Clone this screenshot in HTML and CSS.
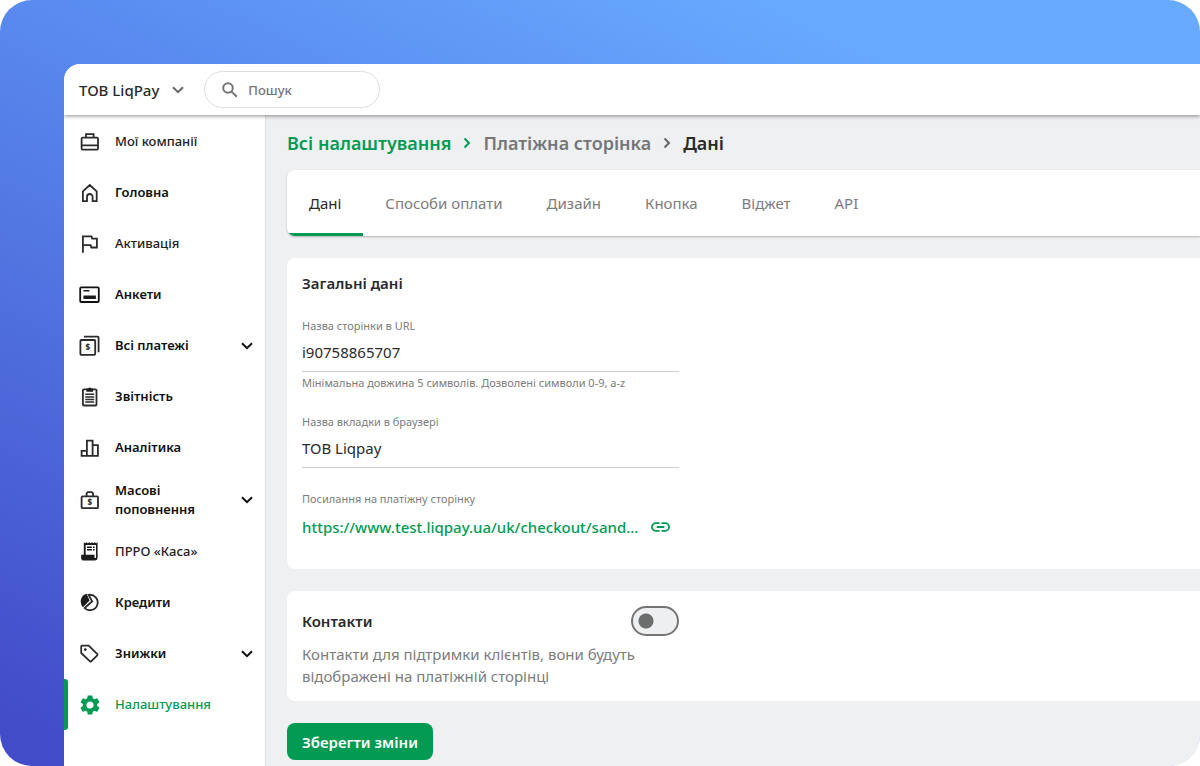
FILE: index.html
```html
<!DOCTYPE html>
<html lang="uk">
<head>
<meta charset="utf-8">
<title>ТОВ LiqPay</title>
<meta name="viewport" content="width=device-width, initial-scale=1">
<link rel="stylesheet" href="styles.css">
</head>
<body>
<div class="stage">
  <div class="window">
    <header class="topbar">
      <button class="company" type="button">ТОВ LiqPay
        <svg class="chevron" viewBox="0 0 12 8"><path d="M1 1.2l5 5 5-5"/></svg>
      </button>
      <label class="search">
        <svg class="search-icon" viewBox="0 0 16 16"><circle cx="6" cy="6" r="4.8"/><path d="M9.6 9.6l5.2 5.2"/></svg>
        <input class="search-input" type="search" placeholder="Пошук" aria-label="Пошук">
      </label>
    </header>
    <div class="body">
      <nav class="sidebar">
        <a class="nav-item soft" href="#">
          <svg class="icon" viewBox="0 0 22 22"><rect x="2.6" y="6.6" width="16.4" height="12" rx="1"/><path d="M7 6.600V3.200h7.600V6.600M2.600 14.400H19"/></svg>
          <span class="nav-text">Мої компанії</span>
        </a>
        <a class="nav-item" href="#">
          <svg class="icon" viewBox="0 0 22 22"><path d="M3.9 19.1V9.4L10.8 3l6.9 6.4v9.7h-4.1v-4.3a2.8 2.8 0 0 0-5.6 0v4.3z"/></svg>
          <span class="nav-text">Головна</span>
        </a>
        <a class="nav-item soft" href="#">
          <svg class="icon" viewBox="0 0 22 22"><path d="M3.9 19.8V3.3h8.6l.6 2.4h4.8v8.8h-5.6l-.6-2.4H3.9"/></svg>
          <span class="nav-text">Активація</span>
        </a>
        <a class="nav-item" href="#">
          <svg class="icon dark" viewBox="0 0 22 22"><rect x="1.2" y="3.4" width="18.6" height="14.6" rx="1"/><path class="solid" d="M4.4 6h6v1.6h-6zM4.4 11.4h12.5v3.7H4.4z"/></svg>
          <span class="nav-text">Анкети</span>
        </a>
        <a class="nav-item" href="#">
          <svg class="icon" viewBox="0 0 22 22"><rect x="1.4" y="5" width="14.8" height="14.8" rx="1"/><path d="M5 1.7h13.6a1 1 0 0 1 1 1v14.6"/><text class="sign" x="8.8" y="15.4">$</text></svg>
          <span class="nav-text">Всі платежі</span>
          <svg class="chevron" viewBox="0 0 12 8"><path d="M1 1.2l5 5 5-5"/></svg>
        </a>
        <a class="nav-item" href="#">
          <svg class="icon" viewBox="0 0 22 22"><rect x="3.9" y="3.3" width="13.6" height="16.2" rx="1"/><path class="solid" d="M7.4 2.4h2a1.4 1.4 0 0 1 2.6 0h2v3.4H7.4z"/><path class="thin" d="M6.2 8.3h9M6.2 10.9h9M6.2 13.5h9M6.2 16.1h9"/></svg>
          <span class="nav-text">Звітність</span>
        </a>
        <a class="nav-item" href="#">
          <svg class="icon" viewBox="0 0 22 22"><path d="M7.9 13.8H2.6v5.1h16.3V8.2h-5.3M7.9 18.9V3.6h5.7v15.3"/></svg>
          <span class="nav-text">Аналітика</span>
        </a>
        <a class="nav-item tall" href="#">
          <svg class="icon" viewBox="0 0 22 22"><rect x="2.6" y="7.4" width="16.4" height="11.8" rx="1"/><path d="M7.6 7V4.4l1.2-1.2h4l1.2 1.2V7"/><text class="sign" x="10.8" y="16.4">$</text></svg>
          <span class="nav-text">Масові поповнення</span>
          <svg class="chevron" viewBox="0 0 12 8"><path d="M1 1.2l5 5 5-5"/></svg>
        </a>
        <a class="nav-item soft" href="#">
          <svg class="icon dark" viewBox="0 0 22 22"><path class="solid" fill-rule="evenodd" d="M4.8 1.2l1.3 1 1.4-1 1.4 1 1.4-1 1.4 1 1.4-1 1.4 1 1.4-1 1.4 1 1.3-1v15.3a3 3 0 0 1-3 3H4.9a2.8 2.8 0 0 1-2.8-2.8v-2.9h2.7zM6.7 4v9.8h8.8v2.6a.8.8 0 0 0 1.5 0V4z"/><path class="thin" d="M8 6.2h4.8M8 8.8h4.8M14 6.2h1.6M14 8.8h1.6"/></svg>
          <span class="nav-text">ПРРО «Каса»</span>
        </a>
        <a class="nav-item" href="#">
          <svg class="icon" viewBox="0 0 22 22"><path class="solid" d="M7.6 1.800L10.600 8.600l-6.600 6.600A8.600 8.600 0 0 1 1.700 9.400C1.700 6 4.100 2.600 7.600 1.800z"/><path d="M9.600 2.900a7.700 7.700 0 1 1-3.900 13.200l7.500-6.900z"/></svg>
          <span class="nav-text">Кредити</span>
        </a>
        <a class="nav-item" href="#">
          <svg class="icon" viewBox="0 0 22 22"><path d="M2.200 3.700a1 1 0 0 1 1-1h6.500l8.600 8.500a.8.8 0 0 1 0 1.100l-6.200 6.100a.8.8 0 0 1-1.100 0L2.200 10z"/><circle class="solid" cx="6.300" cy="6.600" r="1.300"/></svg>
          <span class="nav-text">Знижки</span>
          <svg class="chevron" viewBox="0 0 12 8"><path d="M1 1.2l5 5 5-5"/></svg>
        </a>
        <a class="nav-item active" href="#" aria-current="page">
          <svg class="icon" viewBox="1 1 22 22"><path class="solid" d="M19.140 12.940c.04-.3.060-.61.060-.94 0-.32-.02-.64-.07-.94l2.030-1.580a.49.490 0 0 0 .12-.61l-1.920-3.320a.488.488 0 0 0-.59-.22l-2.390.96c-.5-.38-1.030-.7-1.620-.94l-.36-2.540a.484.484 0 0 0-.48-.41h-3.840c-.24 0-.43.170-.47.410l-.36 2.540c-.59.240-1.130.570-1.620.940l-2.390-.96c-.22-.08-.47 0-.59.220L2.740 8.870c-.12.210-.08.470.12.610l2.030 1.580c-.05.300-.09.630-.09.940s.02.640.07.940l-2.030 1.580a.49.490 0 0 0-.12.610l1.920 3.320c.12.220.37.290.59.220l2.390-.96c.5.380 1.030.700 1.620.940l.36 2.540c.05.240.24.410.48.410h3.840c.24 0 .44-.17.470-.41l.36-2.540c.59-.24 1.130-.56 1.620-.94l2.390.96c.22.080.47 0 .59-.22l1.920-3.320c.12-.22.070-.47-.12-.61zM12 15.600A3.610 3.610 0 0 1 8.400 12c0-1.980 1.620-3.600 3.600-3.600s3.600 1.620 3.600 3.600-1.620 3.600-3.600 3.600z"/></svg>
          <span class="nav-text">Налаштування</span>
        </a>
      </nav>
      <main class="main">
        <nav class="crumbs" aria-label="Навігація">
          <a class="crumb-root" href="#">Всі налаштування</a>
          <svg class="crumb-arrow green" viewBox="0 0 8 12"><path d="M1.5 1.5L6 6l-4.500 4.500"/></svg>
          <a class="crumb-link" href="#">Платіжна сторінка</a>
          <svg class="crumb-arrow" viewBox="0 0 8 12"><path d="M1.5 1.5L6 6l-4.500 4.500"/></svg>
          <span class="crumb-here">Дані</span>
        </nav>
        <div class="tabs" role="tablist">
          <button class="tab selected" type="button" role="tab" aria-selected="true">Дані</button>
          <button class="tab" type="button" role="tab">Способи оплати</button>
          <button class="tab" type="button" role="tab">Дизайн</button>
          <button class="tab" type="button" role="tab">Кнопка</button>
          <button class="tab" type="button" role="tab">Віджет</button>
          <button class="tab" type="button" role="tab">API</button>
        </div>
        <section class="card general">
          <h2 class="card-title">Загальні дані</h2>
          <div class="field">
            <label class="field-label" for="page-name">Назва сторінки в URL</label>
            <input class="field-input" id="page-name" type="text" value="i90758865707">
            <p class="hint">Мінімальна довжина 5 символів. Дозволені символи 0-9, a-z</p>
          </div>
          <div class="field">
            <label class="field-label" for="tab-name">Назва вкладки в браузері</label>
            <input class="field-input" id="tab-name" type="text" value="ТОВ Liqpay">
          </div>
          <div class="field">
            <span class="field-label">Посилання на платіжну сторінку</span>
            <div class="link-row">
              <a class="page-link" href="#">https://www.test.liqpay.ua/uk/checkout/sand...</a>
              <button class="copy" type="button" aria-label="Копіювати посилання">
                <svg class="copy-icon" viewBox="2 7 20 10"><path d="M3.900 12c0-1.710 1.390-3.100 3.100-3.100h4V7H7a5 5 0 0 0 0 10h4v-1.900H7c-1.710 0-3.100-1.390-3.100-3.100zM8 13h8v-2H8v2zm9-6h-4v1.900h4a3.100 3.100 0 0 1 0 6.200h-4V17h4a5 5 0 0 0 0-10z"/></svg>
              </button>
            </div>
          </div>
        </section>
        <section class="card contacts">
          <div class="contacts-head">
            <h2 class="card-title"><label for="contacts-on">Контакти</label></h2>
            <input class="switch" id="contacts-on" type="checkbox" role="switch">
          </div>
          <p class="contacts-text">Контакти для підтримки клієнтів, вони будуть відображені на платіжній сторінці</p>
        </section>
        <button class="save" type="button">Зберегти зміни</button>
      </main>
    </div>
  </div>
</div>
</body>
</html>
```
FILE: styles.css
```css
:root {
  --green: #039b54;
  --ink: #2a2a2a;
  --muted: #7c7c7c;
  --page: #eff0f2;
}

* {
  box-sizing: border-box;
}

body {
  margin: 0;
  background: #fff;
  color: var(--ink);
  font-family: "Noto Sans", "Open Sans", sans-serif;
  font-size: 15px;
}

button,
input {
  font: inherit;
  color: inherit;
}

button {
  border: 0;
  padding: 0;
  background: none;
  cursor: pointer;
}

a {
  color: inherit;
  text-decoration: none;
}

h2,
p {
  margin: 0;
}

svg {
  display: block;
  flex: none;
}

.stage {
  display: flex;
  min-height: 100vh;
  padding: 64px 0 0 64px;
  border-radius: 32px;
  overflow: hidden;
  background: linear-gradient(25deg, #424bc8 3%, #5a8cf0 60%, #68aaff 85%);
}

.window {
  flex: 1;
  display: flex;
  flex-direction: column;
  border-top-left-radius: 16px;
  overflow: hidden;
  background: #fff;
}

.topbar {
  display: flex;
  align-items: center;
  gap: 20px;
  height: 51px;
  padding-left: 15px;
  background: #fff;
  box-shadow: 0 1px 4px rgba(0, 0, 0, 0.45);
  z-index: 1;
}

.company {
  display: flex;
  align-items: center;
  gap: 13px;
  font-size: 15px;
  font-weight: 500;
}

.chevron {
  width: 12px;
  height: 8px;
  fill: none;
  stroke: currentColor;
  stroke-width: 2;
}

.company .chevron {
  color: #666;
}

.search {
  display: flex;
  align-items: center;
  gap: 10px;
  width: 176px;
  height: 37px;
  padding: 0 17px;
  border: 1px solid #dcdfdf;
  border-radius: 19px;
}

.search-icon {
  width: 16px;
  height: 16px;
  fill: none;
  stroke: #757575;
  stroke-width: 2;
}

.search-input {
  width: 100%;
  min-width: 0;
  padding: 0;
  border: 0;
  outline: 0;
  background: none;
  font-size: 13px;
  font-weight: 500;
}

.search-input::placeholder {
  color: #757575;
  opacity: 1;
}

.body {
  flex: 1;
  display: flex;
}

.sidebar {
  flex: none;
  width: 202px;
  padding-top: 1px;
  border-right: 1px solid #e0e0e0;
  background: #fff;
}

.nav-item {
  position: relative;
  display: flex;
  align-items: center;
  gap: 14px;
  height: 51px;
  padding: 0 12px 0 15px;
  color: #111;
  font-size: 13px;
  font-weight: 600;
  line-height: 19px;
}

.nav-item.tall {
  height: 53px;
}

.nav-item.soft {
  color: #222;
  font-weight: 500;
}

.nav-item.active {
  color: var(--green);
  font-weight: 500;
}

.nav-item.active::before {
  content: "";
  position: absolute;
  inset: 0 auto 0 0;
  width: 4px;
  border-radius: 0 3px 3px 0;
  background: var(--green);
}

.nav-text {
  flex: 1;
}

.icon {
  width: 22px;
  height: 22px;
  fill: none;
  stroke: #2b2b2b;
  stroke-width: 1.8;
}

.icon.dark {
  stroke: #111;
}

.icon .solid {
  fill: #1c1c1c;
  stroke: none;
}

.icon .thin {
  stroke-width: 1.5;
}

.icon .sign {
  fill: #2b2b2b;
  stroke: none;
  font-size: 8px;
  font-weight: 800;
  text-anchor: middle;
}

.active .icon .solid {
  fill: var(--green);
}

.main {
  flex: 1;
  min-width: 0;
  padding: 14px 0 6px 21px;
  background: var(--page);
}

.crumbs {
  display: flex;
  align-items: center;
  gap: 12px;
  height: 28px;
  margin-bottom: 13px;
  font-size: 18px;
  font-weight: 600;
}

.crumb-root {
  color: var(--green);
}

.crumb-link {
  color: #757777;
}

.crumb-arrow {
  width: 8px;
  height: 12px;
  fill: none;
  stroke: #666;
  stroke-width: 2;
}

.crumb-arrow.green {
  stroke: var(--green);
}

.tabs {
  display: flex;
  height: 66px;
  margin-bottom: 22px;
  border-radius: 8px 0 0 8px;
  overflow: hidden;
  background: #fff;
  box-shadow: 0 1px 2px rgba(0, 0, 0, 0.25);
}

.tab {
  padding: 2px 22px 0;
  border-bottom: 3px solid transparent;
  color: var(--muted);
  font-size: 15px;
}

.tab.selected {
  border-color: var(--green);
  color: var(--ink);
}

.card {
  margin-bottom: 22px;
  border-radius: 8px 0 0 8px;
  background: #fff;
}

.card-title {
  font-size: 15px;
  font-weight: 600;
  line-height: 24px;
}

.general {
  display: grid;
  gap: 23px;
  padding: 13px 15px 30px;
}

.field {
  width: 377px;
  max-width: 100%;
}

.field-label,
.hint {
  display: block;
  color: var(--muted);
  font-size: 11px;
  line-height: 16px;
}

.field-input {
  display: block;
  width: 100%;
  height: 38px;
  padding: 0 0 2px;
  border: 0;
  border-bottom: 1px solid #cfcfcf;
  outline: 0;
  background: none;
  font-size: 15px;
}

.hint {
  margin-top: 3px;
}

.link-row {
  display: flex;
  align-items: center;
  justify-content: space-between;
  margin-top: 8px;
  padding-right: 9px;
  line-height: 24px;
}

.page-link {
  color: var(--green);
  font-weight: 500;
}

.copy-icon {
  width: 19px;
  height: 10px;
  fill: var(--green);
}

.contacts {
  padding: 15px 15px 14px;
}

.contacts-head {
  display: flex;
  align-items: center;
  justify-content: space-between;
  width: 377px;
  max-width: 100%;
  margin-bottom: 7px;
}

.switch {
  appearance: none;
  width: 48px;
  height: 30px;
  margin: 0;
  border: 2px solid #757575;
  border-radius: 15px;
  background: radial-gradient(circle at 13px 50%, #6c6e6e 7px, #eeeff1 8px);
  cursor: pointer;
}

.contacts-text {
  max-width: 345px;
  color: var(--muted);
  font-size: 15px;
  line-height: 22px;
}

.save {
  display: block;
  height: 37px;
  padding: 0 15px;
  border-radius: 8px;
  background: var(--green);
  color: #fff;
  font-size: 15px;
  font-weight: 600;
}
```
